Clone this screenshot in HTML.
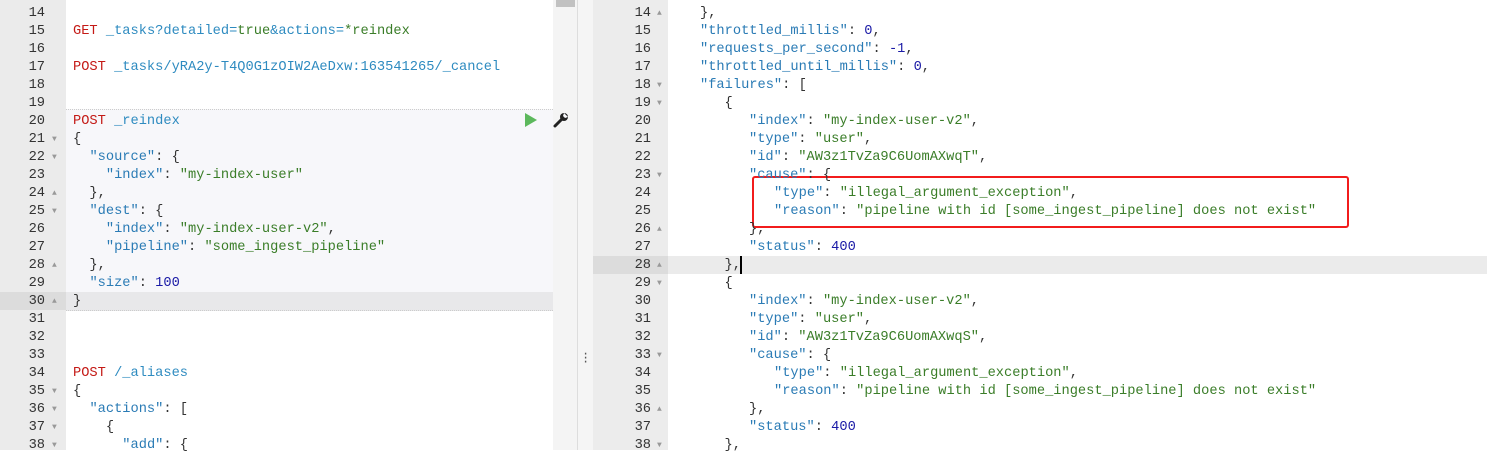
<!DOCTYPE html>
<html><head><meta charset="utf-8"><style>
body{margin:0;width:1487px;height:450px;overflow:hidden;background:#fff;position:relative;font-family:"Liberation Mono",monospace;font-size:13.7px;}
.a{position:absolute;white-space:pre;line-height:18px;height:18px;}
.n{color:#333;text-align:right;width:40px;}
.k{color:#2a7bb5}.s{color:#3a7d28}.m{color:#1a1aa6}.r{color:#c41a16}.u{color:#2e8bc0}.p{color:#333}
.f{position:absolute;color:#999;font-size:8px;line-height:18px;}
</style></head><body>
<div style="position:absolute;left:0;top:0;width:66px;height:450px;background:#ebebeb"></div>
<div style="position:absolute;left:66px;top:109px;width:487px;height:201px;background:#f7f7fa;border-top:1px dotted #ccc;"></div>
<div style="position:absolute;left:0;top:292px;width:66px;height:18px;background:#dcdcdc"></div>
<div style="position:absolute;left:66px;top:292px;width:487px;height:18px;background:#e8e8ea;border-bottom:1px dotted #ccc"></div>
<div style="position:absolute;left:553px;top:0;width:24px;height:450px;background:#f4f4f4"></div>
<div style="position:absolute;left:556px;top:0;width:19px;height:7px;background:#c1c1c1"></div>
<div style="position:absolute;left:577px;top:0;width:15px;height:450px;background:#f5f5f5;border-left:1px solid #ddd;border-right:1px solid #ddd"></div>
<div style="position:absolute;left:582px;top:352px;color:#555;font-size:12px;line-height:4px;">·<br>·<br>·</div>
<div style="position:absolute;left:593px;top:0;width:75px;height:450px;background:#ececec"></div>
<div style="position:absolute;left:593px;top:256px;width:75px;height:18px;background:#dcdcdc"></div>
<div style="position:absolute;left:668px;top:256px;width:819px;height:18px;background:#ebebeb"></div>
<div style="position:absolute;left:740px;top:256px;width:2px;height:18px;background:#000"></div>
<svg style="position:absolute;left:524px;top:112px" width="14" height="16"><path d="M1 1L13 8L1 15Z" fill="#5cb85c"/></svg>
<svg style="position:absolute;left:553px;top:112px" width="16" height="16"><path d="M2 14L9 7" stroke="#222" stroke-width="3" stroke-linecap="round"/><circle cx="11" cy="5" r="4" fill="#222"/><path d="M11 1L15 5L12 6L10 4Z" fill="#f7f7fa"/></svg>
<div style="position:absolute;left:752px;top:176px;width:593px;height:48px;border:2.5px solid #f21c1c;border-radius:3px"></div>
<div id="L"></div>
<script>
function tp(n){return 5+(n-14)*18}
var h='';
var L={14:'',15:'<span class="r">GET</span> <span class="u">_tasks?detailed=</span><span class="s">true</span><span class="u">&amp;actions=</span><span class="s">*reindex</span>',16:'',17:'<span class="r">POST</span> <span class="u">_tasks/yRA2y-T4Q0G1zOIW2AeDxw:163541265/_cancel</span>',18:'',19:'',
20:'<span class="r">POST</span> <span class="u">_reindex</span>',21:'{',22:'  <span class="k">"source"</span>: {',23:'    <span class="k">"index"</span>: <span class="s">"my-index-user"</span>',24:'  },',25:'  <span class="k">"dest"</span>: {',26:'    <span class="k">"index"</span>: <span class="s">"my-index-user-v2"</span>,',27:'    <span class="k">"pipeline"</span>: <span class="s">"some_ingest_pipeline"</span>',28:'  },',29:'  <span class="k">"size"</span>: <span class="m">100</span>',30:'}',31:'',32:'',33:'',34:'<span class="r">POST</span> <span class="u">/_aliases</span>',35:'{',36:'  <span class="k">"actions"</span>: [',37:'    {',38:'      <span class="k">"add"</span>: {'};
var lf={21:'▼',22:'▼',24:'▲',25:'▼',28:'▲',30:'▲',35:'▼',36:'▼',37:'▼',38:'▼'};
for(var n=14;n<=38;n++){h+='<div class="a n" style="left:5px;top:'+tp(n)+'px">'+n+'</div>';
if(lf[n])h+='<div class="f" style="left:52px;top:'+tp(n)+'px">'+lf[n]+'</div>';
h+='<div class="a p" style="left:73px;top:'+tp(n)+'px">'+L[n]+'</div>';}
var x=[676,700,724.5,749,774];
var R={14:[1,'},'],15:[1,'<span class="k">"throttled_millis"</span>: <span class="m">0</span>,'],16:[1,'<span class="k">"requests_per_second"</span>: <span class="m">-1</span>,'],17:[1,'<span class="k">"throttled_until_millis"</span>: <span class="m">0</span>,'],18:[1,'<span class="k">"failures"</span>: ['],19:[2,'{'],
20:[3,'<span class="k">"index"</span>: <span class="s">"my-index-user-v2"</span>,'],21:[3,'<span class="k">"type"</span>: <span class="s">"user"</span>,'],22:[3,'<span class="k">"id"</span>: <span class="s">"AW3z1TvZa9C6UomAXwqT"</span>,'],23:[3,'<span class="k">"cause"</span>: {'],24:[4,'<span class="k">"type"</span>: <span class="s">"illegal_argument_exception"</span>,'],25:[4,'<span class="k">"reason"</span>: <span class="s">"pipeline with id [some_ingest_pipeline] does not exist"</span>'],26:[3,'},'],27:[3,'<span class="k">"status"</span>: <span class="m">400</span>'],28:[2,'},'],29:[2,'{'],
30:[3,'<span class="k">"index"</span>: <span class="s">"my-index-user-v2"</span>,'],31:[3,'<span class="k">"type"</span>: <span class="s">"user"</span>,'],32:[3,'<span class="k">"id"</span>: <span class="s">"AW3z1TvZa9C6UomAXwqS"</span>,'],33:[3,'<span class="k">"cause"</span>: {'],34:[4,'<span class="k">"type"</span>: <span class="s">"illegal_argument_exception"</span>,'],35:[4,'<span class="k">"reason"</span>: <span class="s">"pipeline with id [some_ingest_pipeline] does not exist"</span>'],36:[3,'},'],37:[3,'<span class="k">"status"</span>: <span class="m">400</span>'],38:[2,'},']};
var rf={14:'▲',18:'▼',19:'▼',23:'▼',26:'▲',28:'▲',29:'▼',33:'▼',36:'▲',38:'▼'};
for(var n=14;n<=38;n++){h+='<div class="a n" style="left:611px;top:'+tp(n)+'px">'+n+'</div>';
if(rf[n])h+='<div class="f" style="left:657px;top:'+tp(n)+'px">'+rf[n]+'</div>';
h+='<div class="a p" style="left:'+x[R[n][0]]+'px;top:'+tp(n)+'px">'+R[n][1]+'</div>';}
document.getElementById('L').innerHTML=h;
</script>
</body></html>
